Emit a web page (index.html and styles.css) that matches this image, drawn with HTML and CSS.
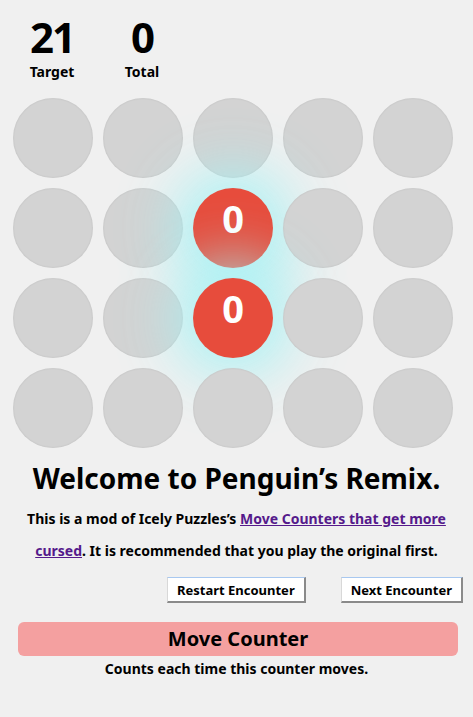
FILE: index.html
```html
<!DOCTYPE html>
<html>
<head>
<meta charset="utf-8">
<link rel="stylesheet" href="styles.css">
</head>
<body>
<div class="stats">
  <div class="stat"><div class="num">21</div><div class="label">Target</div></div>
  <div class="stat"><div class="num">0</div><div class="label">Total</div></div>
</div>
<div class="grid">
  <div class="cell"></div><div class="cell"></div><div class="cell"></div><div class="cell"></div><div class="cell"></div>
  <div class="cell"></div><div class="cell"></div><div class="cell red">0</div><div class="cell"></div><div class="cell"></div>
  <div class="cell"></div><div class="cell"></div><div class="cell red">0</div><div class="cell"></div><div class="cell"></div>
  <div class="cell"></div><div class="cell"></div><div class="cell"></div><div class="cell"></div><div class="cell"></div>
</div>
<h1 class="title">Welcome to Penguin’s Remix.</h1>
<p class="intro">This is a mod of Icely Puzzles’s <a href="#" class="link">Move Counters that get more cursed</a>. It is recommended that you play the original first.</p>
<div class="buttons">
  <button class="btn">Restart Encounter</button>
  <button class="btn">Next Encounter</button>
</div>
<div class="counter">Move Counter</div>
<div class="desc">Counts each time this counter moves.</div>
</body>
</html>
```
FILE: styles.css
```css
html, body {
  margin: 0;
  padding: 0;
  background: #f0f0f0;
}
body {
  font-family: "Noto Sans", "Open Sans", sans-serif;
  font-weight: 700;
  color: #000;
}
.stats {
  display: flex;
  gap: 10px;
  padding: 12px 0 0 12px;
}
.stat {
  width: 80px;
  text-align: center;
}
.num {
  font-size: 42px;
  line-height: 50px;
  letter-spacing: -2px;
}
.label {
  font-size: 14px;
  line-height: 18px;
  margin-top: 1px;
}
.grid {
  display: grid;
  grid-template-columns: repeat(5, 80px);
  grid-auto-rows: 80px;
  gap: 10px;
  padding: 17px 0 0 13px;
}
.cell {
  border-radius: 50%;
  background: #d3d3d3;
  box-shadow: inset 0 0 2px rgba(0, 0, 0, 0.12);
}
.red {
  background: #e74c3c;
  color: #fff;
  font-size: 38px;
  display: flex;
  align-items: center;
  justify-content: center;
  padding-bottom: 20px;
  box-sizing: border-box;
  box-shadow: 0 0 60px 18px rgba(160, 242, 244, 0.85);
}
.title {
  margin: 12px 0 0;
  text-align: center;
  font-size: 28px;
  line-height: 36px;
}
.intro {
  margin: 7px 18px 0;
  text-align: center;
  font-size: 14px;
  line-height: 32px;
}
.link {
  color: #551a8b;
  text-decoration: underline;
}
.buttons {
  display: flex;
  justify-content: flex-end;
  gap: 35px;
  padding: 10px 10px 0 0;
}
.btn {
  font-family: "Noto Sans", "Open Sans", sans-serif;
  font-weight: 700;
  font-size: 13px;
  background: #fff;
  border-style: solid;
  border-width: 1px 2px 2px 1px;
  border-color: #a8c8f0 #8a8a8a #8a8a8a #d8d8d8;
  padding: 0 9px;
  height: 26px;
  line-height: 20px;
  color: #000;
}
.counter {
  margin: 19px 15px 0 18px;
  background: #f4a0a0;
  border-radius: 6px;
  height: 34px;
  line-height: 34px;
  text-align: center;
  font-size: 20px;
}
.desc {
  text-align: center;
  font-size: 14px;
  line-height: 26px;
}
```
